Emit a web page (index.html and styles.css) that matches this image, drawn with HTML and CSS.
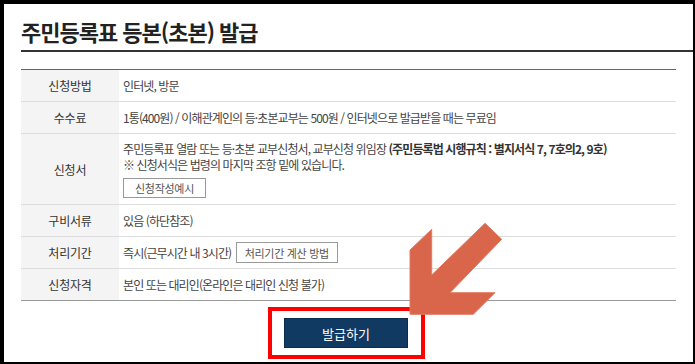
FILE: index.html
```html
<!DOCTYPE html>
<html lang="ko">
<head>
    <meta charset="UTF-8">
    <title>주민등록표 등본(초본) 발급</title>
    <link rel="stylesheet" href="styles.css">
</head>
<body>
<div class="frame">
    <h2 class="title">주민등록표 등본(초본) 발급</h2>

    <table class="info">
        <tr>
            <th>신청방법</th>
            <td>인터넷, 방문</td>
        </tr>
        <tr>
            <th>수수료</th>
            <td>1통(400원) / 이해관계인의 등·초본교부는 500원 / 인터넷으로 발급받을 때는 무료임</td>
        </tr>
        <tr class="tall">
            <th>신청서</th>
            <td>
                <p class="line">주민등록표 열람 또는 등·초본 교부신청서, 교부신청 위임장 <b>(주민등록법 시행규칙 : 별지서식 7, 7호의2, 9호)</b></p>
                <p class="line">※ 신청서식은 법령의 마지막 조항 밑에 있습니다.</p>
                <button class="small-btn sample">신청작성예시</button>
            </td>
        </tr>
        <tr>
            <th>구비서류</th>
            <td>있음 (하단참조)</td>
        </tr>
        <tr>
            <th>처리기간</th>
            <td>즉시(근무시간 내 3시간) <button class="small-btn">처리기간 계산 방법</button></td>
        </tr>
        <tr class="last">
            <th>신청자격</th>
            <td>본인 또는 대리인(온라인은 대리인 신청 불가)</td>
        </tr>
    </table>

    <div class="actions">
        <span class="highlight"><button class="issue">발급하기</button></span>
    </div>

    <!-- pointer arrow drawn over the page -->
    <svg class="arrow" width="110" height="100" viewBox="0 0 110 100">
        <polygon points="6,94.3 6,30 27.7,9.3 27.7,55 81,3.3 97.7,19.3 46,72.7 91,72.7 69.3,94.3"
                 fill="#d9654a" stroke="#e07a62" stroke-width="1"/>
    </svg>
</div>
</body>
</html>
```

FILE: styles.css
```css
body {
    margin: 0;
    font-family: "Noto Sans CJK KR", "Noto Sans", sans-serif;
    color: #333;
    background-color: #fff;
}

.frame {
    position: relative;
    box-sizing: border-box;
    width: 695px;
    height: 364px;
    border-style: solid;
    border-color: #000;
    border-width: 4px 2px 2px 4px;
    padding-left: 17px;
}

.title {
    margin: 0;
    padding-top: 12px;
    height: 34px;
    font-size: 22px;
    font-weight: bold;
    letter-spacing: -1px;
    line-height: 30px;
    color: #222;
    border-bottom: 2px solid #333;
}

.info {
    margin-top: 17px;
    width: 655px;
    border-collapse: collapse;
    border-top: 1px solid #666;
    border-bottom: 1px solid #999;
    font-size: 12px;
    letter-spacing: -0.9px;
}

.info tr {
    border-bottom: 1px solid #ddd;
}

.info tr.last {
    border-bottom: 1px solid #999;
}

.info th {
    width: 98px;
    height: 31px;
    padding: 0;
    font-weight: normal;
    letter-spacing: -0.2px;
    color: #333;
    background-color: #f4f4f4;
    text-align: center;
    vertical-align: middle;
}

.info td {
    padding: 0 4px;
    color: #444;
    vertical-align: middle;
}

.info tr.tall td {
    padding-top: 7px;
    padding-bottom: 6px;
}

.line {
    margin: 0;
    line-height: 16px;
}

.line b {
    color: #333;
}

.small-btn {
    height: 21px;
    padding: 0 8px;
    font-family: inherit;
    font-size: 11px;
    letter-spacing: -0.3px;
    color: #555;
    background-color: #fff;
    border: 1px solid #999;
    margin-left: 2px;
}

.sample {
    display: block;
    margin: 5px 0 0 0;
    width: 83px;
    height: 20px;
}

.actions {
    width: 651px;
    margin-top: 6px;
    text-align: center;
}

.highlight {
    display: inline-block;
    border: 4px solid #ff0000;
    padding: 7px 13px 7px 12px;
    line-height: 0;
}

.issue {
    width: 124px;
    height: 30px;
    font-family: inherit;
    font-size: 13px;
    color: #fff;
    background-color: #113a62;
    border: 1px solid #0b2d4f;
}

.arrow {
    position: absolute;
    left: 400px;
    top: 216px;
}
```
